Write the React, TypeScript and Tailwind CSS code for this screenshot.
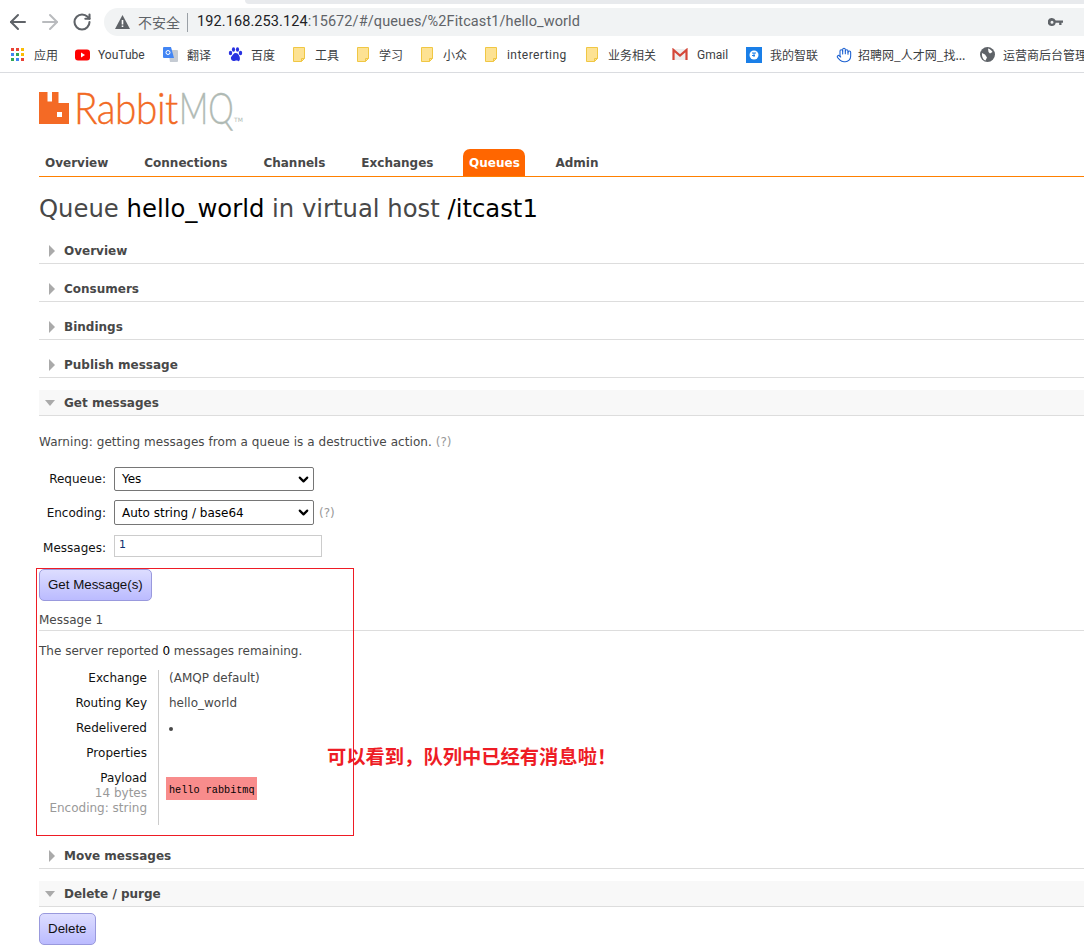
import { ArrowLeft, ArrowRight, RotateCw, Hand, ChevronDown } from "lucide-react";

const ui = "font-['Noto_Sans_CJK_SC','Noto_Sans',sans-serif]";

function Folder() {
  return (
    <svg width="12" height="15" viewBox="0 0 12 15" className="shrink-0 mr-[10px]">
      <path d="M.5.5h11v11l-3 3H.5z" fill="#fde293" stroke="#f0c744" />
      <path d="M11.500 11.500h-3v3" fill="none" stroke="#f0c744" />
    </svg>
  );
}

function Bookmark({ icon, label, className }: { icon: React.ReactNode; label: string; className?: string }) {
  return (
    <div className={`flex items-center shrink-0 whitespace-nowrap ${className ?? ""}`}>
      {icon}
      <span>{label}</span>
    </div>
  );
}

function AppsIcon() {
  const colors = ["#ea4335", "#ea4335", "#fbbc04", "#4285f4", "#34a853", "#fbbc04", "#34a853", "#4285f4", "#ea4335"];
  return (
    <div className="grid grid-cols-3 gap-[2px] w-[13px] mr-[10px] shrink-0">
      {colors.map((c, i) => (
        <div key={i} className="h-[3px] w-[3px]" style={{ backgroundColor: c }} />
      ))}
    </div>
  );
}

function BrowserBar() {
  return (
    <div className={`shrink-0 ${ui}`}>
      <div className="h-[4px] pl-[245px] bg-white">
        <div className="h-full bg-[#e8eaed] rounded-bl-md" />
      </div>
      <div className="h-[36px] flex items-center pl-[6px]">
        <ArrowLeft size={24} strokeWidth={2} className="text-[#5f6368] shrink-0" />
        <ArrowRight size={24} strokeWidth={2} className="text-[#b9bbbe] ml-[8px] shrink-0" />
        <RotateCw size={20} strokeWidth={2.5} className="text-[#5f6368] ml-[10px] shrink-0" />
        <div className="ml-[12px] h-[28px] flex-1 min-w-0 bg-[#f1f3f4] rounded-l-full flex items-center pl-[11px]">
          <svg width="15" height="14" viewBox="0 0 15 14" className="shrink-0">
            <path d="M7.500 0 15 14H0z" fill="#5f6368" />
            <path d="M6.700 5h1.600v4.500H6.700zM6.700 10.500h1.600V12H6.700z" fill="#fff" />
          </svg>
          <span className="ml-[8px] text-[14px] text-[#5f6368]">不安全</span>
          <div className="w-px h-[19px] bg-[#9aa0a6] ml-[7px] mr-[9px]" />
          <span className="text-[14.500px] tracking-[0.1px] text-[#202124] font-['Roboto',sans-serif] whitespace-nowrap">
            192.168.253.124<span className="text-[#5f6368]">:15672/#/queues/%2Fitcast1/hello_world</span>
          </span>
          <svg width="15" height="9" viewBox="0 0 15 9" className="ml-auto mr-[21px] shrink-0">
            <path
              fillRule="evenodd"
              fill="#5f6368"
              d="M4 0a4 4 0 0 1 3.700 2.500H15v2.300h-1.500V7h-2.300V4.800H7.700A4 4 0 1 1 4 0m0 2.800a1.500 1.500 0 1 0 0 3 1.500 1.500 0 0 0 0-3"
            />
          </svg>
        </div>
      </div>
      <div className="h-[33px] flex items-center pl-[11px] pb-[3px] text-[12px] text-[#3c4043] border-b border-[#dadce0] overflow-hidden">
        <Bookmark icon={<AppsIcon />} label="应用" className="w-[64px]" />
        <Bookmark
          icon={
            <svg width="15" height="12" viewBox="0 0 15 12" className="mr-[8px] shrink-0">
              <rect width="15" height="11" y=".5" rx="3" fill="#f00" />
              <path d="M6 3.500v5l4-2.500z" fill="#fff" />
            </svg>
          }
          label="YouTube"
          className="w-[88px] font-['Roboto',sans-serif]"
        />
        <Bookmark
          icon={
            <svg width="15" height="15" viewBox="0 0 15 15" className="mr-[9px] shrink-0">
              <path d="M5 3h9a1 1 0 0 1 1 1v10a1 1 0 0 1-1 1H7z" fill="#c5cbd3" />
              <path d="M1 0h7l3 11H1a1 1 0 0 1-1-1V1a1 1 0 0 1 1-1" fill="#4285f4" />
              <circle cx="5" cy="5.500" r="2" fill="none" stroke="#fff" />
            </svg>
          }
          label="翻译"
          className="w-[65px]"
        />
        <Bookmark
          icon={
            <svg width="15" height="15" viewBox="0 0 14 15" className="mr-[8px] shrink-0" fill="#2932e1">
              <ellipse cx="2" cy="6" rx="1.700" ry="2.200" />
              <ellipse cx="5" cy="2.500" rx="1.600" ry="2.200" />
              <ellipse cx="9" cy="2.500" rx="1.600" ry="2.200" />
              <ellipse cx="12" cy="6" rx="1.700" ry="2.200" />
              <path d="M7 6c-2 0-2.500 2-4 3.500S3 14 5 14s3-1 4.500 0S12 12 11 9.500 9 6 7 6" />
            </svg>
          }
          label="百度"
          className="w-[65px]"
        />
        <Bookmark icon={<Folder />} label="工具" className="w-[64px]" />
        <Bookmark icon={<Folder />} label="学习" className="w-[64px]" />
        <Bookmark icon={<Folder />} label="小众" className="w-[64px]" />
        <Bookmark icon={<Folder />} label="intererting" className="w-[101px] tracking-[0.45px] font-['Roboto',sans-serif]" />
        <Bookmark icon={<Folder />} label="业务相关" className="w-[86px]" />
        <Bookmark
          icon={
            <svg width="16" height="13" viewBox="0 0 16 13" className="mr-[9px] shrink-0">
              <path d="M1 1h14v11H1z" fill="#eee" />
              <path d="M1.500 12V2L8 7.500 14.500 2v10" fill="none" stroke="#d44638" strokeWidth="2.200" />
            </svg>
          }
          label="Gmail"
          className="w-[74px] font-['Roboto',sans-serif]"
        />
        <Bookmark
          icon={
            <svg width="16" height="16" viewBox="0 0 16 16" className="mr-[8px] shrink-0">
              <rect width="16" height="16" fill="#1a7fe8" />
              <circle cx="8" cy="8" r="4.500" fill="#fff" />
              <path d="M6 6h4M8 6v4M6 8.500h3" stroke="#1a7fe8" fill="none" />
            </svg>
          }
          label="我的智联"
          className="w-[90px]"
        />
        <Bookmark icon={<Hand size={16} strokeWidth={1.6} className="text-[#1a5fd0] mr-[6px] shrink-0" />} label="招聘网_人才网_找..." className="w-[144px]" />
        <Bookmark
          icon={
            <svg width="15" height="15" viewBox="0 0 15 15" className="mr-[8px] shrink-0">
              <circle cx="7.500" cy="7.500" r="7.500" fill="#5f6368" />
              <path d="M8 1.500c2 .5 4 2 4.500 3.500L10 6.500 8.500 5zM2 6l3 1.500 2 3-1.500 3C3.500 13 1.500 10 2 6" fill="#fff" />
            </svg>
          }
          label="运营商后台管理"
        />
      </div>
    </div>
  );
}

function Logo() {
  return (
    <div className="flex items-start h-[33px] overflow-visible">
      <svg width="30" height="32" viewBox="0 0 30 32" className="shrink-0">
        <path fillRule="evenodd" fill="#f46a25" d="M0 0h8.500v9.500H13V0h6.500v11H30v21H0zM18 20v5h5v-5z" />
      </svg>
      <div className="ml-[5px] w-[105px] h-[33px] -mt-[1px] text-[44px] leading-[33px] font-light font-['Lato',sans-serif] text-[#f26a24] [-webkit-text-stroke:0.4px_#f26a24]">
        <span className="inline-block origin-left scale-x-[0.88] tracking-[-0.5px]">Rabbit</span>
      </div>
      <div className="w-[55px] h-[33px] -mt-[1px] text-[44px] leading-[33px] font-light font-['Lato',sans-serif] text-[#b0bab4] [-webkit-text-stroke:0.4px_#b0bab4]">
        <span className="inline-block origin-left scale-x-[0.73]">MQ</span>
      </div>
      <span className="self-end mb-[2px] text-[6px] leading-[6px] text-[#b0bab4]">TM</span>
    </div>
  );
}

const navItems = ["Overview", "Connections", "Channels", "Exchanges", "Queues", "Admin"];

function Nav() {
  return (
    <div className="mt-[24px] h-[28px] flex items-end border-b border-[#ff8000] text-[12px] font-bold text-[#484848]">
      <div className="flex gap-[24px]">
        {navItems.map((n) =>
          n === "Queues" ? (
            <div key={n} className="h-[27px] w-[62px] rounded-t-[7px] bg-[#ff6600] text-white flex items-center justify-center">
              {n}
            </div>
          ) : (
            <div key={n} className="h-[27px] px-[6px] flex items-center">
              {n}
            </div>
          ),
        )}
      </div>
    </div>
  );
}

function SectionHead({ title, open }: { title: string; open?: boolean }) {
  return (
    <div className={`h-[26px] flex items-center border-b border-[#dddddd] text-[12px] font-bold text-[#484848] ${open ? "bg-[#f8f8f8]" : ""}`}>
      {open ? (
        <div className="ml-[6px] mr-[9px] w-0 h-0 border-x-[5px] border-x-transparent border-t-[6px] border-t-[#aaaaaa]" />
      ) : (
        <div className="ml-[10px] mr-[9px] w-0 h-0 border-y-[6px] border-y-transparent border-l-[6px] border-l-[#aaaaaa]" />
      )}
      {title}
    </div>
  );
}

function FormRow({ label, children, className }: { label: string; children: React.ReactNode; className: string }) {
  return (
    <div className={`flex items-center ${className}`}>
      <div className="w-[69px] pr-[2px] text-right text-[12px] text-[#111] whitespace-nowrap">{label}</div>
      <div className="ml-[6px] flex items-center">{children}</div>
    </div>
  );
}

function FakeSelect({ value, h }: { value: string; h: string }) {
  return (
    <div className={`w-[200px] ${h} border border-[#767676] rounded-[2px] bg-white flex items-center justify-between pl-[7px] pr-[2px] text-[12px] text-black`}>
      <span>{value}</span>
      <ChevronDown size={15} strokeWidth={3.5} />
    </div>
  );
}

function Button({ label }: { label: string }) {
  return (
    <div className="inline-flex items-center h-[32px] px-[8px] rounded-[5px] border border-[#9999dd] bg-gradient-to-b from-[#ddddff] to-[#bbbbff] text-[13.333px] text-[#111] font-['Liberation_Sans',sans-serif]">
      {label}
    </div>
  );
}

function DetailRow({ label, children, className }: { label: React.ReactNode; children?: React.ReactNode; className: string }) {
  return (
    <div className={`flex leading-[15px] ${className}`}>
      <div className="w-[120px] pr-[11px] pt-[1px] text-right text-[#111] border-r border-[#cccccc] whitespace-nowrap">{label}</div>
      <div className="pl-[10px] pt-[1px] text-[#484848]">{children}</div>
    </div>
  );
}

export default function App() {
  return (
    <div className="relative w-[1084px] h-[950px] overflow-hidden bg-white flex flex-col font-['DejaVu_Sans',sans-serif] text-[12px] text-[#484848]">
      <BrowserBar />

      <div className="pl-[39px] pt-[19px]">
        <Logo />
        <Nav />

        <h1 className="mt-[16px] h-[32px] text-[24.300px] leading-[32px] font-normal text-[#484848] whitespace-nowrap">
          Queue <b className="font-normal text-black">hello_world</b> in virtual host <b className="font-normal text-black">/itcast1</b>
        </h1>

        <div className="mt-[13px] flex flex-col gap-[12px]">
          <SectionHead title="Overview" />
          <SectionHead title="Consumers" />
          <SectionHead title="Bindings" />
          <SectionHead title="Publish message" />
          <SectionHead title="Get messages" open />
        </div>

        <p className="mt-[18px] h-[17px] leading-[17px] whitespace-nowrap tracking-[0.06px]">
          Warning: getting messages from a queue is a destructive action. <span className="text-[#999999]">(?)</span>
        </p>

        <div className="mt-[16px]">
          <FormRow label="Requeue:" className="h-[24px]">
            <FakeSelect value="Yes" h="h-[24px]" />
          </FormRow>
          <FormRow label="Encoding:" className="h-[25px] mt-[9px]">
            <FakeSelect value="Auto string / base64" h="h-[25px]" />
            <span className="ml-[5px] text-[#999999]">(?)</span>
          </FormRow>
          <FormRow label="Messages:" className="h-[22px] mt-[10px] [&>div:first-child]:pt-[3px]">
            <div className="w-[208px] h-[22px] border border-[#cccccc] pl-[4px] pt-[1px] text-[11px] leading-[16px] text-[#103070]">1</div>
          </FormRow>
        </div>

        <div className="mt-[12px] h-[32px]">
          <Button label="Get Message(s)" />
        </div>

        <div className="mt-[10px] h-[20px] leading-[19px] border-b border-[#dddddd]">Message 1</div>
        <p className="mt-[12px] h-[17px] leading-[17px]">
          The server reported <span className="text-black">0</span> messages remaining.
        </p>

        <div className="mt-[10px] w-[300px]">
          <DetailRow label="Exchange" className="h-[25px]">(AMQP default)</DetailRow>
          <DetailRow label="Routing Key" className="h-[25px]">hello_world</DetailRow>
          <DetailRow label="Redelivered" className="h-[25px]">
            <span className="inline-block w-[4px] h-[4px] rounded-full bg-[#484848] mb-[1px]" />
          </DetailRow>
          <DetailRow label="Properties" className="h-[25px]" />
          <DetailRow
            label={
              <>
                Payload
                <div className="text-[#999999]">14 bytes</div>
                <div className="text-[#999999]">Encoding: string</div>
              </>
            }
            className="h-[55px]"
          >
            <div className="-ml-[3px] mt-[6px] h-[23px] w-[91px] bg-[#f88c8c] flex items-center pl-[3px] pt-[3px] text-[10.200px] text-black font-['Liberation_Mono',monospace] whitespace-nowrap">
              hello rabbitmq
            </div>
          </DetailRow>
        </div>

        <div className="mt-[18px] flex flex-col gap-[12px]">
          <SectionHead title="Move messages" />
          <SectionHead title="Delete / purge" open />
        </div>
        <div className="mt-[6px] h-[32px]">
          <Button label="Delete" />
        </div>
      </div>

      {/* hand-drawn annotation on top of the screenshot */}
      <div className="absolute left-[36px] top-[568px] w-[318px] h-[268px] border border-[#ee1c25]" />
      <div className={`absolute left-[327px] top-[742px] text-[19.300px] leading-[28px] font-bold text-[#ee1c25] whitespace-nowrap ${ui}`}>
        可以看到，队列中已经有消息啦！
      </div>
    </div>
  );
}
